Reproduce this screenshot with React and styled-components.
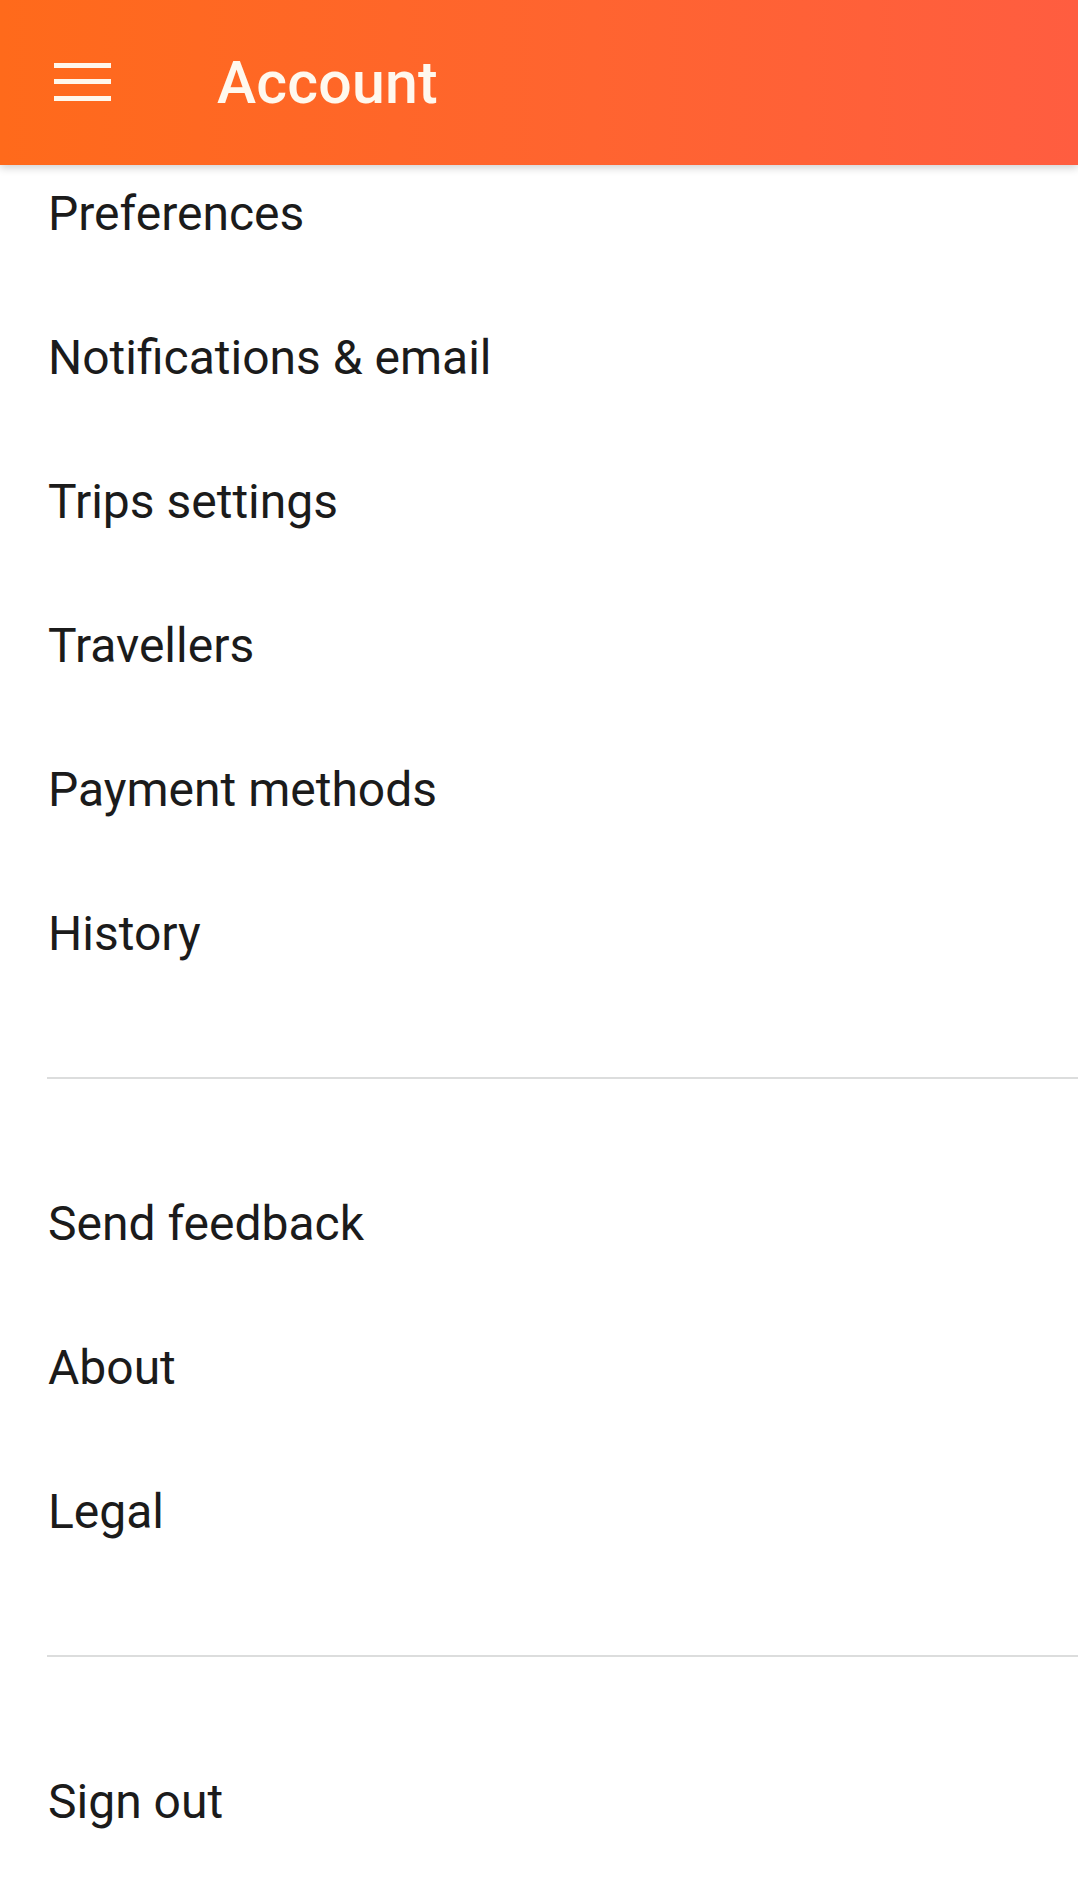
import { Fragment } from 'react'
import styled, { createGlobalStyle } from 'styled-components'

const GlobalStyle = createGlobalStyle`
  html, body {
    margin: 0;
    padding: 0;
    background: #ffffff;
    font-family: Roboto, "Noto Sans", "Liberation Sans", sans-serif;
  }
  body { overflow: hidden; }
`;

const Page = styled.div`
  width: 1078px;
  height: 1887px;
  overflow: hidden;
  background: #ffffff;
`;

const Header = styled.header`
  position: relative;
  z-index: 2;
  display: flex;
  align-items: center;
  height: 165px;
  padding-left: 54px;
  box-sizing: border-box;
  background: linear-gradient(90deg, #ff6a1b 0%, #ff6430 55%, #ff5d40 100%);
  box-shadow: 0 3px 8px rgba(0, 0, 0, 0.18);
`;

const MenuButton = styled.button`
  display: flex;
  flex-direction: column;
  justify-content: space-between;
  width: 57px;
  height: 38px;
  padding: 0;
  margin-top: -2px;
  border: none;
  background: none;
  cursor: pointer;
`;

const MenuLine = styled.span`
  display: block;
  height: 5px;
  width: 100%;
  background: #fff7ec;
`;

const Title = styled.h1`
  margin: 0 0 0 106px;
  font-size: 59px;
  font-weight: 500;
  color: #fff8ee;
  letter-spacing: 0.2px;
`;

const List = styled.ul`
  list-style: none;
  margin: -24px 0 0 0;
  padding: 0;
`;

const Item = styled.li`
  display: flex;
  align-items: center;
  height: 144px;
  padding-left: 48px;
  font-size: 48px;
  color: #1b1b1b;
  cursor: pointer;
`;

const DividerRow = styled.li`
  display: flex;
  align-items: center;
  height: 146px;
  padding-left: 47px;
`;

const Rule = styled.hr`
  flex: 1;
  height: 2px;
  margin: 0;
  border: none;
  background: #dcdddd;
`;

const sections = [
  ['Preferences', 'Notifications & email', 'Trips settings', 'Travellers', 'Payment methods', 'History'],
  ['Send feedback', 'About', 'Legal'],
  ['Sign out'],
]

export default function App() {
  return (
    <Page>
      <GlobalStyle />
      <Header>
        <MenuButton aria-label="Menu">
          <MenuLine />
          <MenuLine />
          <MenuLine />
        </MenuButton>
        <Title>Account</Title>
      </Header>
      <List>
        {sections.map((items, i) => (
          <Fragment key={i}>
            {i > 0 && <DividerRow><Rule /></DividerRow>}
            {items.map(label => <Item key={label}>{label}</Item>)}
          </Fragment>
        ))}
      </List>
    </Page>
  )
}
